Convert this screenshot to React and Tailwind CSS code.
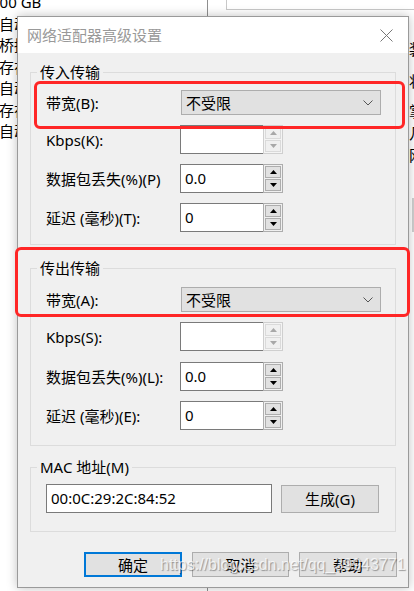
import React from 'react'

const Arrow = ({ up, disabled }) => (
  <svg width="7" height="4" viewBox="0 0 7 4">
    <polygon
      points={up ? '0,4 3.5,0 7,4' : '0,0 7,0 3.5,4'}
      fill={disabled ? '#a8a8a8' : '#000000'}
    />
  </svg>
)

const Spinner = ({ value, disabled }) => (
  <div className="flex h-[29px] w-[103px] shrink-0">
    <div className="flex-1 border border-r-0 border-[#7a7a7a] bg-white pl-[4px] pt-[3px] leading-[20px]">
      {value}
    </div>
    <div
      className={`flex w-[20px] flex-col gap-px border p-px ${disabled ? 'border-[#cfcfcf] bg-[#f4f4f4]' : 'border-[#adadad] bg-[#f0f0f0]'}`}
    >
      <div
        className={`flex flex-1 items-center justify-center border ${disabled ? 'border-[#dadada] bg-[#f0f0f0]' : 'border-[#adadad] bg-[#e1e1e1]'}`}
      >
        <Arrow up disabled={disabled} />
      </div>
      <div
        className={`flex flex-1 items-center justify-center border ${disabled ? 'border-[#dadada] bg-[#f0f0f0]' : 'border-[#adadad] bg-[#e1e1e1]'}`}
      >
        <Arrow disabled={disabled} />
      </div>
    </div>
  </div>
)

const Select = ({ value }) => (
  <div className="ml-px flex h-[25px] flex-1 items-center justify-between border border-[#adadad] bg-[#e1e1e1] pl-[4px] pr-[7px]">
    <span className="leading-[20px]">{value}</span>
    <svg width="10" height="6" viewBox="0 0 10 6">
      <polyline points="0.5,0.5 5,5 9.5,0.5" fill="none" stroke="#555" strokeWidth="1" />
    </svg>
  </div>
)

const Row = ({ label, className = '', children }) => (
  <div className={`flex items-center ${className}`}>
    <div className="w-[134px] shrink-0 whitespace-nowrap leading-[20px]">{label}</div>
    {children}
  </div>
)

const Group = ({ title, className = '', children }) => (
  <fieldset className={`border border-[#dcdcdc] px-[6px] ${className}`}>
    <legend className="px-[3px] leading-[20px]">{title}</legend>
    <div className="pl-[9px] pr-[8px]">{children}</div>
  </fieldset>
)

const Button = ({ children, primary, className = '' }) => (
  <div
    className={`flex items-center justify-center bg-[#e1e1e1] leading-[20px] ${primary ? 'border-2 border-[#0078d7]' : 'border border-[#adadad]'} ${className}`}
  >
    {children}
  </div>
)

const App = () => {
  const behind = ['自动检测', '桥接模式', '存在', '自动检测', '存在', '自动检测']

  return (
    <div className="relative h-[591px] w-[414px] overflow-hidden bg-white font-['Noto_Sans','Noto_Sans_CJK_SC',sans-serif] text-[15px] text-black">
      {/* window behind */}
      <div className="flex h-full">
        <div className="w-[208px] shrink-0 border-r border-[#8f8f8f]">
          <div className="-mt-[8px] flex flex-col leading-[21.5px]">
            <span className="-ml-[9px] whitespace-nowrap">100 GB</span>
            {behind.map((t, i) => (
              <span key={i} className="-ml-px whitespace-nowrap">
                {t}
              </span>
            ))}
          </div>
        </div>
        <div className="flex-1">
          <div className="ml-[18px] h-[10px] border-b border-l border-[#c8c8c8]" />
          <div className="ml-[201px] mt-[28px] flex w-[40px] flex-col leading-[22px] whitespace-nowrap">
            <span>装</span>
            <span className="mt-[10px]">状</span>
            <span className="mt-[8px]">掌</span>
            <span>几</span>
            <span>网</span>
          </div>
          <div className="ml-[204px] mt-[32px] h-[34px] w-[10px] bg-[#d0d0d0]" />
        </div>
      </div>

      {/* dialog */}
      <div className="absolute left-[17px] top-[16px] flex h-[572px] w-[392px] flex-col border border-[#9a9a9a] bg-[#f0f0f0] shadow-[0_0_10px_rgba(0,0,0,0.25)]">
        <div className="flex h-[36px] shrink-0 items-center justify-between bg-white pl-[9px] pr-[15px]">
          <span className="text-[#999999]">网络适配器高级设置</span>
          <svg width="13" height="13" viewBox="0 0 13 13">
            <path d="M0.5 0.5 L12.5 12.5 M12.5 0.5 L0.5 12.5" stroke="#777" strokeWidth="1" />
          </svg>
        </div>

        <div className="flex flex-col px-[12px] pt-[9px]">
          <Group title="传入传输" className="pb-[12px]">
            <Row label="带宽(B):" className="mt-[8px]">
              <Select value="不受限" />
            </Row>
            <Row label="Kbps(K):" className="mt-[10px]">
              <Spinner value="" disabled />
            </Row>
            <Row label="数据包丢失(%)(P)" className="mt-[10px]">
              <Spinner value="0.0" />
            </Row>
            <Row label="延迟 (毫秒)(T):" className="mt-[10px]">
              <Spinner value="0" />
            </Row>
          </Group>

          <Group title="传出传输" className="mt-[13px] pb-[15px]">
            <Row label="带宽(A):" className="mt-[9px]">
              <Select value="不受限" />
            </Row>
            <Row label="Kbps(S):" className="mt-[10px]">
              <Spinner value="" disabled />
            </Row>
            <Row label="数据包丢失(%)(L):" className="mt-[11px]">
              <Spinner value="0.0" />
            </Row>
            <Row label="延迟 (毫秒)(E):" className="mt-[10px]">
              <Spinner value="0" />
            </Row>
          </Group>

          <Group title="MAC 地址(M)" className="mt-[11px] pb-[18px]">
            <div className="mt-[7px] flex items-center gap-[9px]">
              <div className="h-[29px] w-[226px] border border-[#7a7a7a] bg-white pl-[4px] pt-[3px] leading-[20px]">
                00:0C:29:2C:84:52
              </div>
              <Button className="h-[28px] w-[98px]">生成(G)</Button>
            </div>
          </Group>
        </div>

        <div className="mt-[20px] flex justify-end gap-[10px] pr-[11px]">
          <Button primary className="h-[25px] w-[98px]">确定</Button>
          <Button className="h-[25px] w-[97px]">取消</Button>
          <Button className="h-[25px] w-[98px]">帮助</Button>
        </div>
      </div>

      {/* annotations */}
      <div className="absolute left-[34px] top-[81px] h-[48px] w-[371px] rounded-[6px] border-[3px] border-[#ff2626]" />
      <div className="absolute left-[15px] top-[247px] h-[70px] w-[395px] rounded-[6px] border-[3px] border-[#ff2626]" />

      {/* watermark */}
      <div className="absolute left-[160px] top-[556px] whitespace-nowrap font-['Liberation_Sans',sans-serif] text-[16px] leading-[18px] text-[rgba(255,255,255,0.75)] [text-shadow:1px_1px_1px_rgba(0,0,0,0.35)]">
        https://blog.csdn.net/qq_39943771
      </div>
    </div>
  )
}

export default App
